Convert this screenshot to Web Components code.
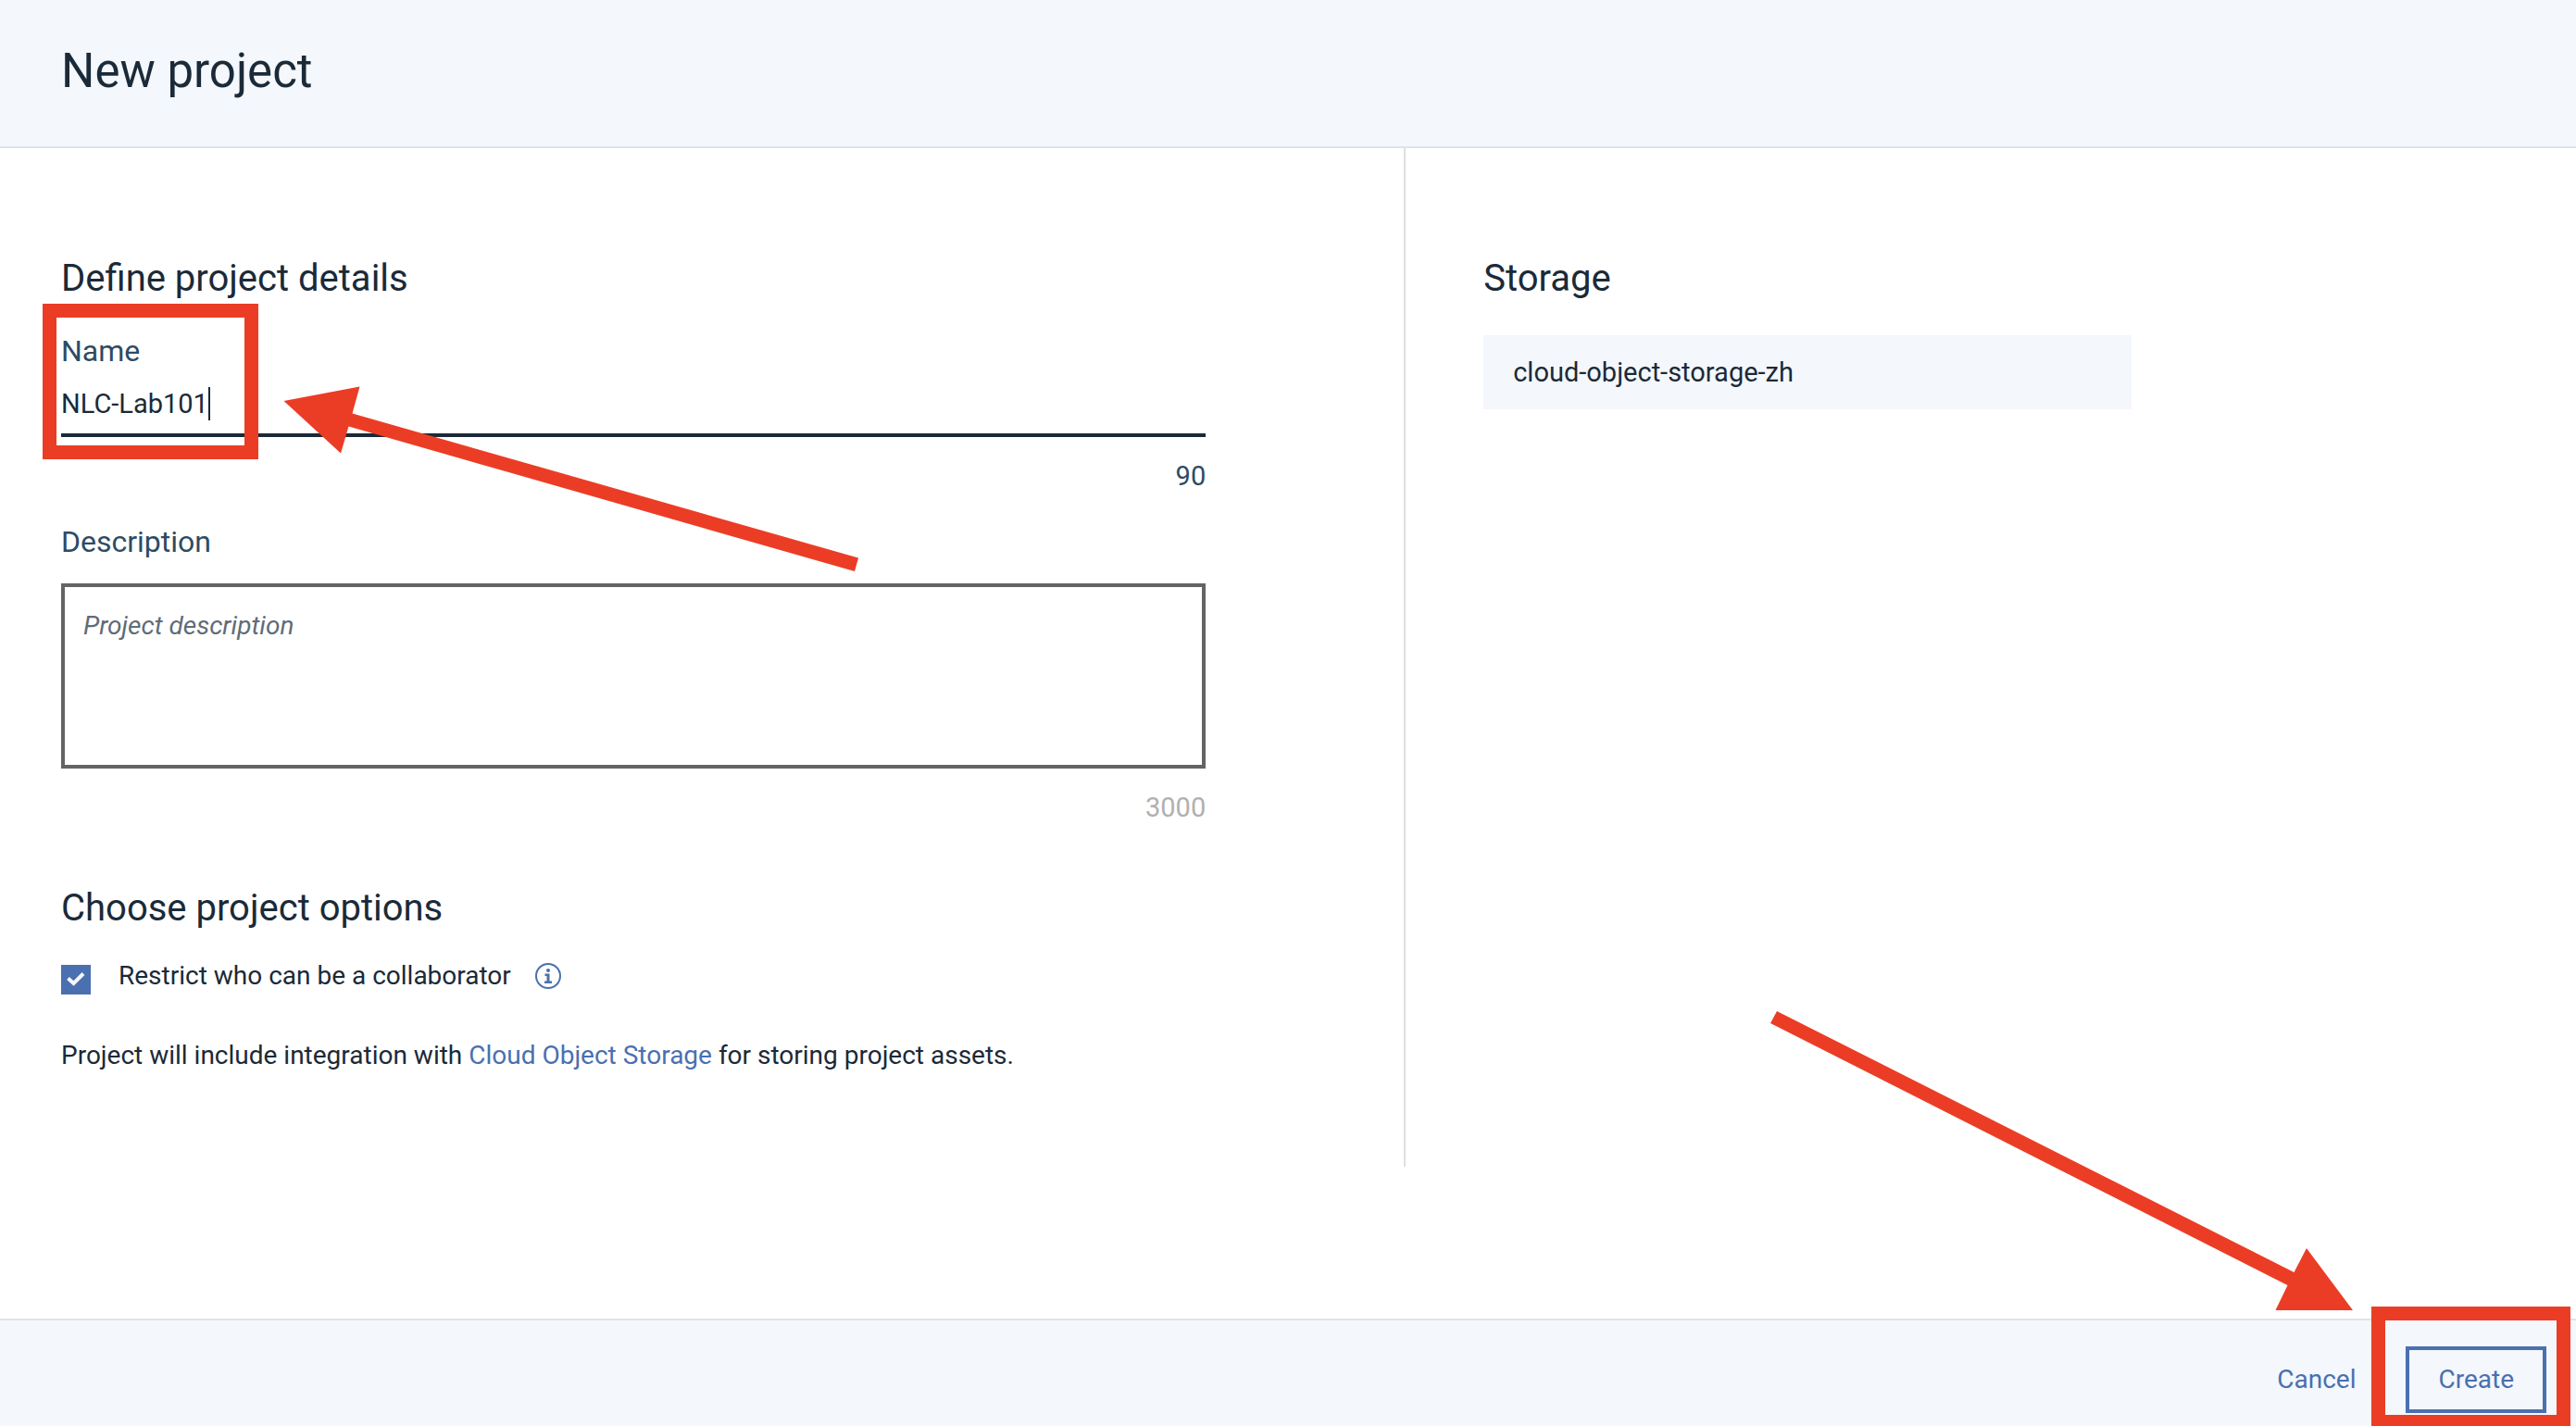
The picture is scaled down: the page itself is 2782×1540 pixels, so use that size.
<!DOCTYPE html>
<html lang="en">
<head>
<meta charset="utf-8">
<title>New project</title>
<style>
  :root {
    --ink: #1b2a38;
    --label: #2e4b63;
    --blue: #4a70b0;
    --panel: #f4f7fb;
    --rule: #dfe3e8;
    --mark: #eb3d26;
    --title-size: 51px;
    --heading-size: 40px;
    --label-size: 32px;
    --value-size: 29px;
    --body-size: 28px;
  }
  body {
    margin: 0;
    background: #fff;
    color: var(--ink);
    font-family: Roboto, "Open Sans", sans-serif;
    font-size: var(--body-size);
    line-height: 36px;
  }
</style>
</head>
<body>
<project-page>
  <page-header slot="header">New project</page-header>
  <form-section slot="details" heading="Define project details">
    <name-field label="Name" value="NLC-Lab101" remaining="90"></name-field>
    <description-field label="Description" placeholder="Project description" remaining="3000"></description-field>
  </form-section>
  <form-section slot="details" heading="Choose project options">
    <check-option>Restrict who can be a collaborator</check-option>
    <integration-note></integration-note>
  </form-section>
  <form-section slot="storage" heading="Storage">
    <storage-card>cloud-object-storage-zh</storage-card>
  </form-section>
  <action-bar slot="footer"></action-bar>
  <callout-marks slot="marks"></callout-marks>
</project-page>

<script>
  const define = (name, render) => customElements.define(name, class extends HTMLElement {
    constructor() {
      super();
      this.attachShadow({ mode: "open" }).innerHTML = render(this);
    }
  });

  define("project-page", () => `
    <style>
      :host { display: flex; flex-direction: column; min-height: 100vh; position: relative; overflow: hidden; }
      main { flex: 1; display: grid; grid-template-columns: 545fr 455fr; align-items: stretch; padding-bottom: 164px; }
      .details { display: flex; flex-direction: column; gap: 66px; padding: 116px 214px 102px 66px; }
      .storage { padding: 116px 66px 102px 84px; border-left: 2px solid #dfdfdf; }
    </style>
    <slot name="header"></slot>
    <main>
      <div class="details"><slot name="details"></slot></div>
      <div class="storage"><slot name="storage"></slot></div>
    </main>
    <slot name="footer"></slot>
    <slot name="marks"></slot>`);

  define("page-header", () => `
    <style>
      :host { display: block; background: var(--panel); border-bottom: 2px solid var(--rule); padding: 45px 66px 49px; }
      h1 { margin: 0; font-size: var(--title-size); line-height: 64px; font-weight: 400; }
    </style>
    <h1><slot></slot></h1>`);

  define("form-section", el => `
    <style>
      :host { display: block; }
      h2 { margin: 0; font-size: var(--heading-size); line-height: 50px; font-weight: 400; }
    </style>
    <section><h2>${el.getAttribute("heading")}</h2><slot></slot></section>`);

  const fieldStyle = `
    :host { display: flex; flex-direction: column; margin-top: 33px; }
    label { font-size: var(--label-size); line-height: 40px; color: var(--label); }
    .count { margin-top: 24px; text-align: right; color: var(--label); font-size: var(--value-size); }`;

  define("name-field", el => `
    <style>
      ${fieldStyle}
      .line { display: flex; margin-top: 19px; padding-bottom: 14px; border-bottom: 4px solid var(--ink); cursor: text; font-size: var(--value-size); }
      input { field-sizing: content; height: 36px; padding: 0; border: 0; outline: 0; background: none; color: inherit; font: inherit; }
      .caret { width: 2px; background: var(--ink); }
    </style>
    <label for="name">${el.getAttribute("label")}</label>
    <div class="line"><input id="name" type="text" value="${el.getAttribute("value")}"><span class="caret"></span></div>
    <div class="count">${el.getAttribute("remaining")}</div>`);

  define("description-field", el => `
    <style>
      ${fieldStyle}
      textarea { box-sizing: border-box; width: 100%; height: 200px; margin: 25px 0 0; padding: 24px 20px; border: 4px solid #646464; border-radius: 0; background: none; resize: none; outline: 0; color: inherit; font: inherit; }
      textarea::placeholder { color: #5f6c77; font-style: italic; opacity: 1; }
      .count { color: #b0b0b0; }
    </style>
    <label for="description">${el.getAttribute("label")}</label>
    <textarea id="description" placeholder="${el.getAttribute("placeholder")}"></textarea>
    <div class="count">${el.getAttribute("remaining")}</div>`);

  define("check-option", () => `
    <style>
      :host { display: flex; align-items: flex-start; margin-top: 30px; }
      input { appearance: none; width: 32px; height: 32px; margin: 6px 30px 0 0; background: var(--blue); }
      input:checked { background: var(--blue) url("data:image/svg+xml,%3Csvg xmlns='http://www.w3.org/2000/svg' viewBox='0 0 32 32'%3E%3Cpath d='M7.5 14.5l6 5.5L24 9.5' fill='none' stroke='%23f4f7fb' stroke-width='4'/%3E%3C/svg%3E"); }
      svg { width: 28px; height: 28px; margin: 4px 0 0 26px; }
    </style>
    <input id="restrict" type="checkbox" checked>
    <label for="restrict"><slot></slot></label>
    <svg viewBox="0 0 28 28" fill="#4a70b0" aria-hidden="true">
      <circle cx="14" cy="14" r="13" fill="none" stroke="#4a70b0" stroke-width="2"/>
      <circle cx="14" cy="8" r="2"/>
      <path d="M10.500 11.500h5v8h2.500v2.500h-8v-2.500h2.500v-5.500h-2z"/>
    </svg>`);

  define("integration-note", () => `
    <style>
      :host { display: block; margin-top: 48px; }
      p { margin: 0; }
      a { color: var(--blue); text-decoration: none; }
    </style>
    <p>Project will include integration with <a href="#storage">Cloud Object Storage</a> for storing project assets.</p>`);

  define("storage-card", () => `
    <style>
      :host { display: block; box-sizing: border-box; max-width: 700px; margin-top: 36px; padding: 22px 32px; background: var(--panel); font-size: var(--value-size); }
    </style>
    <slot></slot>`);

  define("action-bar", () => `
    <style>
      :host { display: flex; justify-content: flex-end; align-items: flex-start; gap: 24px; background: var(--panel); border-top: 2px solid var(--rule); padding: 28px 32px 14px; }
      button { box-sizing: border-box; height: 72px; padding: 0 31px; border: 4px solid transparent; border-radius: 0; background: none; color: var(--blue); font: inherit; }
      .outlined { border-color: var(--blue); }
      .plain { padding: 0 26px; }
    </style>
    <button class="plain" type="button">Cancel</button>
    <button class="outlined" type="submit">Create</button>`);

  /* Red boxes and arrows drawn over the form: one group follows the name field, the other the Create button. */
  define("callout-marks", () => `
    <style>
      :host { position: absolute; inset: 0; pointer-events: none; overflow: hidden; }
      svg { position: absolute; overflow: visible; fill: var(--mark); }
      rect { fill: none; stroke: var(--mark); stroke-width: 15px; }
      .name { left: 0; top: 0; }
      .create { right: 0; bottom: 0; }
    </style>
    <svg class="name" width="1000" height="700" viewBox="0 0 1000 700" aria-hidden="true">
      <rect x="53.500" y="335.500" width="218" height="153"/>
      <path d="M306.500 433L388.500 417.500L380.500 446.500L927 602.500L923 617L376.500 460.500L368 489.500Z"/>
    </svg>
    <svg class="create" width="900" height="460" viewBox="1882 1080 900 460" aria-hidden="true">
      <rect x="2568.500" y="1418.500" width="200" height="117"/>
      <path d="M2541 1415L2491 1348L2477.500 1374L1919 1092L1912 1105L2470.500 1388L2457.500 1415Z"/>
    </svg>`);
</script>
</body>
</html>
